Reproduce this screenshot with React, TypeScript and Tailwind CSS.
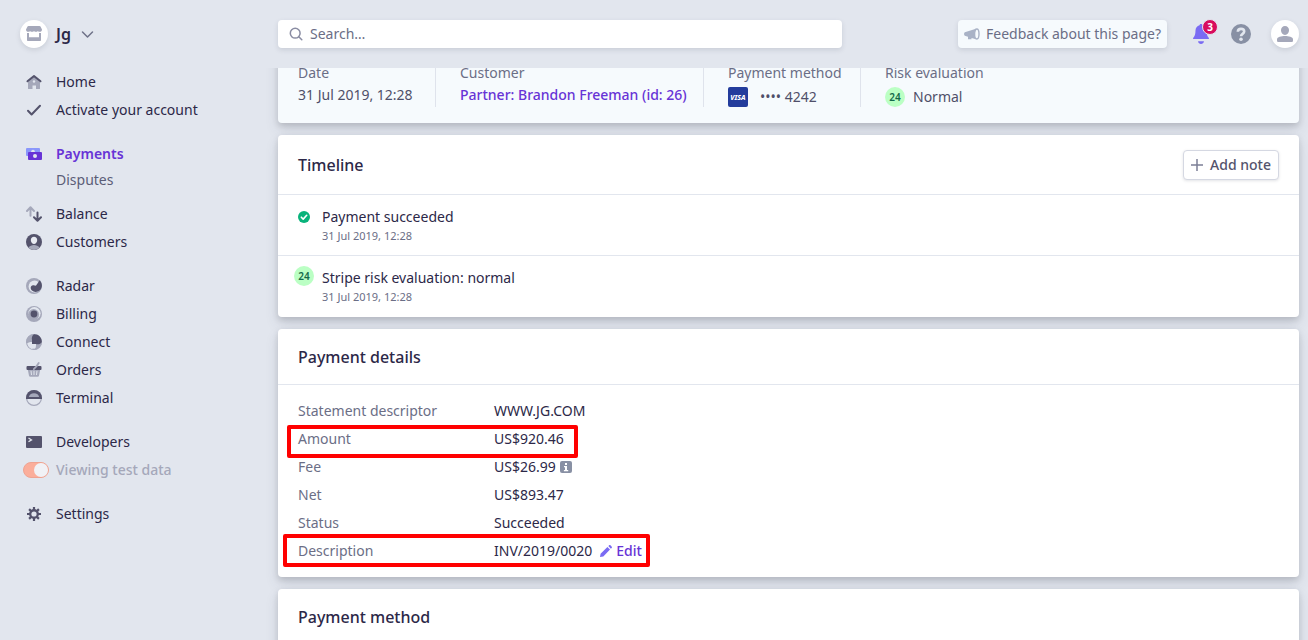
import React from "react";
import type { ReactNode } from "react";

const DARK = "#54536c";
const LIGHT = "#a5a8ba";

function Icon({ children, size = 16 }: { children: ReactNode; size?: number }) {
  return (
    <svg width={size} height={size} viewBox={`0 0 ${size} ${size}`} fill="none" aria-hidden="true" className="shrink-0">
      {children}
    </svg>
  );
}

const icons = {
  home: (
    <Icon>
      <path d="M2 8 8 3.200l6 4.800v6.500a.5.5 0 0 1-.5.5H10v-3.500H6.500V15H2.500a.5.5 0 0 1-.5-.5z" fill={LIGHT} />
      <path d="M1.500 7.300 8 2.100l6.500 5.200" stroke={DARK} strokeWidth="2" strokeLinecap="round" strokeLinejoin="round" />
      <circle cx="8" cy="7.500" r="1.200" fill="#e2e6ee" />
    </Icon>
  ),
  check: (
    <Icon>
      <path d="m2 8.800 3.600 3.700L14 3.800" stroke={DARK} strokeWidth="2" strokeLinecap="round" strokeLinejoin="round" />
    </Icon>
  ),
  payments: (
    <Icon>
      <rect x="0" y="2" width="14" height="8" rx="1" fill="#8a97fb" />
      <circle cx="7" cy="5.500" r="1.800" fill="#e2e6ee" />
      <rect x="2" y="6" width="14" height="8" rx="1" fill="#6733d6" />
      <circle cx="9" cy="10" r="2" fill="#e2e6ee" />
    </Icon>
  ),
  balance: (
    <Icon>
      <path d="M4.500 9.800V1.500M1 5l3.500-3.700L8 5" stroke={LIGHT} strokeWidth="2" strokeLinecap="round" strokeLinejoin="round" />
      <path d="M11.500 6.500v8M8 11.200l3.500 3.600 3.500-3.600" stroke={DARK} strokeWidth="2" strokeLinecap="round" strokeLinejoin="round" />
    </Icon>
  ),
  customers: (
    <Icon>
      <circle cx="8" cy="8" r="8" fill={DARK} />
      <path d="M2.300 13.600C3.800 11.900 5.800 11 8 11s4.200.9 5.700 2.600A8 8 0 0 1 8 16a8 8 0 0 1-5.700-2.400z" fill={LIGHT} />
      <path d="M8 2.800c1.900 0 3.200 1.300 3.200 3.200 0 2.100-1.400 4-3.200 4S4.800 8.100 4.800 6c0-1.900 1.300-3.200 3.200-3.200z" fill="#e8ebf2" />
    </Icon>
  ),
  radar: (
    <Icon>
      <circle cx="8" cy="8" r="8" fill={LIGHT} />
      <circle cx="8.600" cy="8.600" r="6" fill="#e2e6ee" />
      <path d="M3 8.500A5 5 0 0 1 9 4l1.500 2.500L7 9z" fill="#e2e6ee" />
      <path d="M13.700 2.300c2.600 2.700 2.900 6.600.9 9.100-2.300 2.900-6.400 3.200-8.600 1.200-1.400-1.300-1.800-3.500-.6-4.700.9-.9 2.200-.7 3.200-.3.900.3 1.600-.2 2.200-1.200z" fill={DARK} />
    </Icon>
  ),
  billing: (
    <Icon>
      <circle cx="8" cy="8" r="8" fill={LIGHT} />
      <circle cx="8.400" cy="7.300" r="6.200" fill="#e2e6ee" />
      <circle cx="7.600" cy="8.600" r="5.500" fill={LIGHT} />
      <circle cx="8" cy="8" r="3.400" fill={DARK} />
    </Icon>
  ),
  connect: (
    <Icon>
      <circle cx="8" cy="8" r="7.400" stroke={LIGHT} strokeWidth="1.200" />
      <path d="M8 0v6H6v4L.3 9A8 8 0 0 1 8 0z" fill={LIGHT} />
      <path d="M1.500 9.500C2 8.500 3.500 8 6 8v2h2c0 2.400-.8 4.200-2 5-2.500-.5-4.200-2.800-4.500-5.500z" fill="#e2e6ee" />
      <path d="M8 10h2V8h5.900A8 8 0 0 1 8 15.900c1.600-1.200 2.200-2.700 2-5.900z" fill={LIGHT} />
      <path d="M8 .2C12.500 0 16 3.600 15.800 8 14.800 10 12 10.800 10 10H6V6c-.6-2 .2-4.800 2-5.800z" fill={DARK} />
    </Icon>
  ),
  orders: (
    <Icon>
      <path d="m10.200 4.800 2.500-3.800" stroke={LIGHT} strokeWidth="1.800" strokeLinecap="round" />
      <path d="M1.800 7.500h12.400l-1.200 6.300a1.300 1.300 0 0 1-1.300 1H4.300a1.300 1.300 0 0 1-1.300-1z" fill={LIGHT} />
      <path d="M5 8.800 5.500 13M8 8.800V13M11 8.800 10.500 13" stroke="#e2e6ee" />
      <rect x=".5" y="4" width="15" height="4" rx="1" fill={DARK} />
      <path d="m7.800 7.200 3.500-3.700" stroke={LIGHT} strokeWidth="1.800" strokeLinecap="round" />
    </Icon>
  ),
  terminal: (
    <Icon>
      <circle cx="8" cy="8" r="7.400" stroke={LIGHT} strokeWidth="1.200" />
      <path d="M0 9V8a8 8 0 1 1 16 0v1z" fill={DARK} />
      <path d="M2.800 7a5.300 4.800 0 0 1 10.400 0z" fill={LIGHT} />
    </Icon>
  ),
  developers: (
    <Icon>
      <rect y="2" width="16" height="12" rx="1" fill={DARK} />
      <path d="m2.500 4 3 1.900-3 1.900" stroke="#e2e6ee" strokeWidth="1.300" />
    </Icon>
  ),
  settings: (
    <Icon>
      <g stroke={DARK} strokeWidth="2.200">
        <path d="M8 1v14M1 8h14M3.100 3.100l9.800 9.800M12.900 3.100l-9.800 9.800" />
      </g>
      <circle cx="8" cy="8" r="4.900" fill={DARK} />
      <circle cx="8" cy="8" r="2.600" fill="#e2e6ee" />
    </Icon>
  ),
};

function NavItem({ icon, label, active }: { icon: ReactNode; label: string; active?: boolean }) {
  return (
    <li>
      <a
        href="#"
        className={
          active
            ? "flex h-7 items-center gap-[14px] font-semibold text-[#6733d6]"
            : "flex h-7 items-center gap-[14px] text-[#2c2848]"
        }
      >
        {icon}
        {label}
      </a>
    </li>
  );
}

function Sidebar() {
  return (
    <aside className="w-[266px] shrink-0">
      <button type="button" className="ml-5 flex h-[68px] items-center gap-2 text-base font-semibold text-[#2c2848]">
        <span className="flex size-7 items-center justify-center rounded-full bg-white shadow-[0_2px_5px_rgba(60,66,87,0.15)]">
          <Icon>
            <path d="M1 7h2v4.200h10V7h2v7.200a.8.8 0 0 1-.8.800H1.800a.8.8 0 0 1-.8-.8z" fill={LIGHT} />
            <path d="M2.500 0h11c.5 0 .8.200 1 .6L16 3.500c0 1.400-1 2.300-2.200 2.300-.9 0-1.500-.4-1.900-.9-.4.500-1.100.9-1.900.9S8.400 5.400 8 4.900c-.4.5-1.100.9-2 .9s-1.500-.4-1.900-.9c-.4.5-1 .9-1.900.9C1 5.800 0 4.900 0 3.500L1.500.6c.2-.4.500-.6 1-.6z" fill={LIGHT} />
          </Icon>
        </span>
        Jg
        <Icon>
          <path d="m3.500 6 5 5 5-5" stroke="#6f7288" strokeWidth="1.500" strokeLinecap="round" strokeLinejoin="round" />
        </Icon>
      </button>
      <nav className="flex flex-col gap-4 pl-[26px]">
        <ul>
          <NavItem icon={icons.home} label="Home" />
          <NavItem icon={icons.check} label="Activate your account" />
        </ul>
        <ul>
          <NavItem icon={icons.payments} label="Payments" active />
          <li className="mb-2">
            <a href="#" className="flex h-6 items-center pl-[30px] text-[#5b5d77]">
              Disputes
            </a>
          </li>
          <NavItem icon={icons.balance} label="Balance" />
          <NavItem icon={icons.customers} label="Customers" />
        </ul>
        <ul>
          <NavItem icon={icons.radar} label="Radar" />
          <NavItem icon={icons.billing} label="Billing" />
          <NavItem icon={icons.connect} label="Connect" />
          <NavItem icon={icons.orders} label="Orders" />
          <NavItem icon={icons.terminal} label="Terminal" />
        </ul>
        <ul>
          <NavItem icon={icons.developers} label="Developers" />
          <li>
            <label className="-ml-[3px] flex h-7 items-center gap-[7px] font-medium text-[#a5a8ba]">
              <input
                type="checkbox"
                role="switch"
                defaultChecked
                className="flex h-4 w-[26px] shrink-0 appearance-none items-center justify-end rounded-full border border-[#efa391] bg-[#fbae9b] before:size-[14px] before:rounded-full before:bg-[#f1f2f6] before:content-['']"
              />
              Viewing test data
            </label>
          </li>
        </ul>
        <ul>
          <NavItem icon={icons.settings} label="Settings" />
        </ul>
      </nav>
    </aside>
  );
}

function TopBar() {
  return (
    <header className="flex h-[68px] shrink-0 items-center gap-6 pr-[9px] pl-3">
      <label className="flex h-7 max-w-[564px] flex-1 items-center gap-[7px] rounded bg-white pr-3 pl-[11px] shadow-[0_2px_5px_rgba(60,66,87,0.15)]">
        <Icon size={14}>
          <circle cx="6.200" cy="6.200" r="4.900" stroke="#8a8da3" strokeWidth="1.500" />
          <path d="m9.800 9.800 3 3" stroke="#8a8da3" strokeWidth="1.500" strokeLinecap="round" />
        </Icon>
        <input
          type="search"
          aria-label="Search"
          placeholder="Search…"
          className="min-w-0 flex-1 bg-transparent outline-none placeholder:text-[#6b6e86]"
        />
      </label>
      <div className="ml-auto flex items-center">
        <button
          type="button"
          className="flex h-7 items-center gap-1.5 rounded bg-[#f6fafd] px-1.5 text-[#6b6e86] shadow-[0_2px_5px_rgba(60,66,87,0.15)]"
        >
          <Icon>
            <path d="M.8 6.300 12 2.800v10.400L7.500 12v1.300H4v-2.500L.8 9.700c-1-.7-1-2.700 0-3.400z" fill="#a9b2c6" />
            <ellipse cx="12.800" cy="8" rx="2.200" ry="5" fill="#f6fafd" stroke="#a9b2c6" strokeWidth="1.400" />
          </Icon>
          Feedback about this page?
        </button>
        <button type="button" aria-label="Notifications" className="relative ml-[25px] flex">
          <svg width="18" height="20" viewBox="0 0 18 20" fill="#7a6bf3" aria-hidden="true">
            <path d="M9 0c.8 0 1.300.5 1.500 1.200 2.500.7 4 2.800 4 5.300 0 4 .8 5.600 2.200 7.200.3.300.4.700.2 1-.1.200-.3.300-.6.300H1.700c-.3 0-.5-.1-.6-.3-.2-.3-.1-.7.2-1C2.700 12.100 3.500 10.500 3.500 6.500c0-2.500 1.500-4.600 4-5.300C7.700.5 8.200 0 9 0zM6 17.300h6C11.700 19 10.500 20 9 20s-2.700-1-3-2.700z" />
          </svg>
          <span className="absolute -top-[5px] left-[10px] flex size-4 items-center justify-center rounded-full border border-[#e2e6ee] bg-[#d80c5e] text-[10px] leading-none font-bold text-white">
            3
          </span>
        </button>
        <button type="button" aria-label="Help" className="ml-[21px] flex">
          <Icon size={20}>
            <circle cx="10" cy="10" r="10" fill="#8890a4" />
            <path d="M6.800 7.800C6.900 5.900 8.200 4.900 10 4.900s3.200 1 3.200 2.600c0 2.400-3.200 2.300-3.200 4.800" stroke="#e2e6ee" strokeWidth="2.600" />
            <circle cx="10" cy="15.200" r="1.800" fill="#e2e6ee" />
          </Icon>
        </button>
        <button
          type="button"
          aria-label="Profile"
          className="ml-5 flex size-7 items-center justify-center rounded-full bg-white shadow-[0_2px_5px_rgba(60,66,87,0.15)]"
        >
          <Icon>
            <path d="M8 0c2.300 0 4 1.700 4 4.100C12 6.800 10.300 9 8 9S4 6.800 4 4.100C4 1.700 5.700 0 8 0z" fill={LIGHT} />
            <path d="M0 14.500v-1.300C0 11 4.500 10 8 10s8 1 8 3.200v1.300c0 1-.6 1.500-1.500 1.500h-13C.6 16 0 15.500 0 14.500z" fill={LIGHT} />
          </Icon>
        </button>
      </div>
    </header>
  );
}

const cardShadow = "rounded shadow-[0_7px_14px_rgba(60,66,87,0.12),0_3px_6px_rgba(0,0,0,0.14)]";

function Badge24() {
  return (
    <span className="flex size-5 shrink-0 items-center justify-center rounded-full bg-[#bbffc4] text-[10px] leading-none font-semibold text-[#14694a]">
      24
    </span>
  );
}

function Summary() {
  return (
    <section className={`${cardShadow} -mt-[21px] bg-[#f6fafd] px-5 py-4`}>
      <dl className="flex text-[#4f4f69]">
        <div className="flex w-[138px] flex-col gap-0.5 border-r border-[#dfe3ec]">
          <dt className="text-[#6b6e86]">Date</dt>
          <dd>31 Jul 2019, 12:28</dd>
        </div>
        <div className="flex w-[268px] flex-col gap-0.5 border-r border-[#dfe3ec] pl-6">
          <dt className="text-[#6b6e86]">Customer</dt>
          <dd className="font-medium">
            <a href="#" className="text-[#6733d6]">
              Partner: Brandon Freeman (id: 26)
            </a>
          </dd>
        </div>
        <div className="flex w-[157px] flex-col gap-1 border-r border-[#dfe3ec] pl-6">
          <dt className="text-[#6b6e86]">Payment method</dt>
          <dd className="flex items-center gap-3">
            <span className="flex size-5 items-center justify-center rounded-xs bg-[#233c9c] text-[7px] leading-none font-extrabold text-white italic">
              VISA
            </span>
            •••• 4242
          </dd>
        </div>
        <div className="flex flex-col gap-1 pl-6">
          <dt className="text-[#6b6e86]">Risk evaluation</dt>
          <dd className="flex items-center gap-2">
            <Badge24 />
            Normal
          </dd>
        </div>
      </dl>
    </section>
  );
}

function TimelineRow({ marker, title }: { marker: ReactNode; title: string }) {
  return (
    <li className="flex min-h-[61px] gap-1 border-b border-[#e2e6ee] pt-3 pl-4 last:border-b-0">
      <span className="-mt-0.5 flex w-6 justify-start">{marker}</span>
      <div>
        <p className="text-[#2c2848]">{title}</p>
        <p className="text-[11px] leading-[18px] text-[#6b6e86]">31 Jul 2019, 12:28</p>
      </div>
    </li>
  );
}

function Timeline() {
  return (
    <section className={`${cardShadow} bg-white`}>
      <div className="flex h-[60px] items-center justify-between border-b border-[#e2e6ee] px-5">
        <h2 className="text-base font-medium text-[#2c2848]">Timeline</h2>
        <button
          type="button"
          className="flex h-[30px] items-center gap-[7px] rounded border border-[#d5d8e2] bg-white px-[7px] font-medium text-[#54536c] shadow-[0_1px_3px_rgba(60,66,87,0.15)]"
        >
          <Icon size={12}>
            <path d="M6 0v12M0 6h12" stroke="#7c7f96" strokeWidth="1.500" />
          </Icon>
          Add note
        </button>
      </div>
      <ul>
        <TimelineRow
          title="Payment succeeded"
          marker={
            <span className="p-1 pt-[6px]">
              <Icon size={12}>
                <circle cx="6" cy="6" r="6" fill="#09b37b" />
                <path d="m3.300 6.200 1.900 1.900 3.500-3.800" stroke="#fff" strokeWidth="1.600" strokeLinecap="round" strokeLinejoin="round" />
              </Icon>
            </span>
          }
        />
        <TimelineRow title="Stripe risk evaluation: normal" marker={<Badge24 />} />
      </ul>
    </section>
  );
}

function DetailRow({ label, children, mark }: { label: string; children: ReactNode; mark?: ReactNode }) {
  return (
    <div className="relative flex h-7 items-center">
      <dt className="w-[196px] text-[#6b6e86]">{label}</dt>
      <dd className="flex items-center text-[#2c2848]">{children}</dd>
      {mark}
    </div>
  );
}

function PaymentDetails() {
  return (
    <section className={`${cardShadow} bg-white`}>
      <h2 className="flex h-14 items-center border-b border-[#e2e6ee] px-5 text-base font-medium text-[#2c2848]">
        Payment details
      </h2>
      <dl className="px-5 py-3">
        <DetailRow label="Statement descriptor">WWW.JG.COM</DetailRow>
        <DetailRow
          label="Amount"
          mark={<span className="pointer-events-none absolute top-0 -left-[11px] h-[33px] w-[291px] rounded-xs border-4 border-[#ff0000]" />}
        >
          US$920.46
        </DetailRow>
        <DetailRow label="Fee">
          US$26.99
          <button type="button" aria-label="Fee information" className="ml-1">
            <Icon size={12}>
              <rect width="12" height="12" rx="2" fill="#8890a4" />
              <path d="M5 2h2v2H5zM4 5h3v4h1.200v1.200H3.900V9H5V6.200H4z" fill="#fff" />
            </Icon>
          </button>
        </DetailRow>
        <DetailRow label="Net">US$893.47</DetailRow>
        <DetailRow label="Status">Succeeded</DetailRow>
        <DetailRow
          label="Description"
          mark={<span className="pointer-events-none absolute -top-[3px] -left-[15px] h-[33px] w-[367px] rounded-xs border-4 border-[#ff0000]" />}
        >
          INV/2019/0020
          <button type="button" className="ml-2 flex items-center gap-1 font-medium text-[#6733d6]">
            <Icon size={12}>
              <path d="m0 12 .6-3.300L7.400 2l2.600 2.600-6.700 6.800zM8.300 1.100 9 .4c.5-.5 1.200-.5 1.600 0l1 1c.5.500.5 1.100 0 1.600l-.7.700z" fill="#7a6bf3" />
            </Icon>
            Edit
          </button>
        </DetailRow>
      </dl>
    </section>
  );
}

export default function App() {
  return (
    <div className="flex h-screen overflow-hidden bg-[#e2e6ee] font-['Noto_Sans',sans-serif] text-sm">
      <Sidebar />
      <div className="flex min-w-0 flex-1 flex-col">
        <TopBar />
        <main className="flex min-h-0 flex-1 flex-col gap-3 overflow-hidden pr-[9px] pl-3 [&>section]:shrink-0">
          <Summary />
          <Timeline />
          <PaymentDetails />
          <section className={`${cardShadow} bg-white pb-10`}>
            <h2 className="flex h-14 items-center border-b border-[#e2e6ee] px-5 text-base font-medium text-[#2c2848]">
              Payment method
            </h2>
          </section>
        </main>
      </div>
    </div>
  );
}
